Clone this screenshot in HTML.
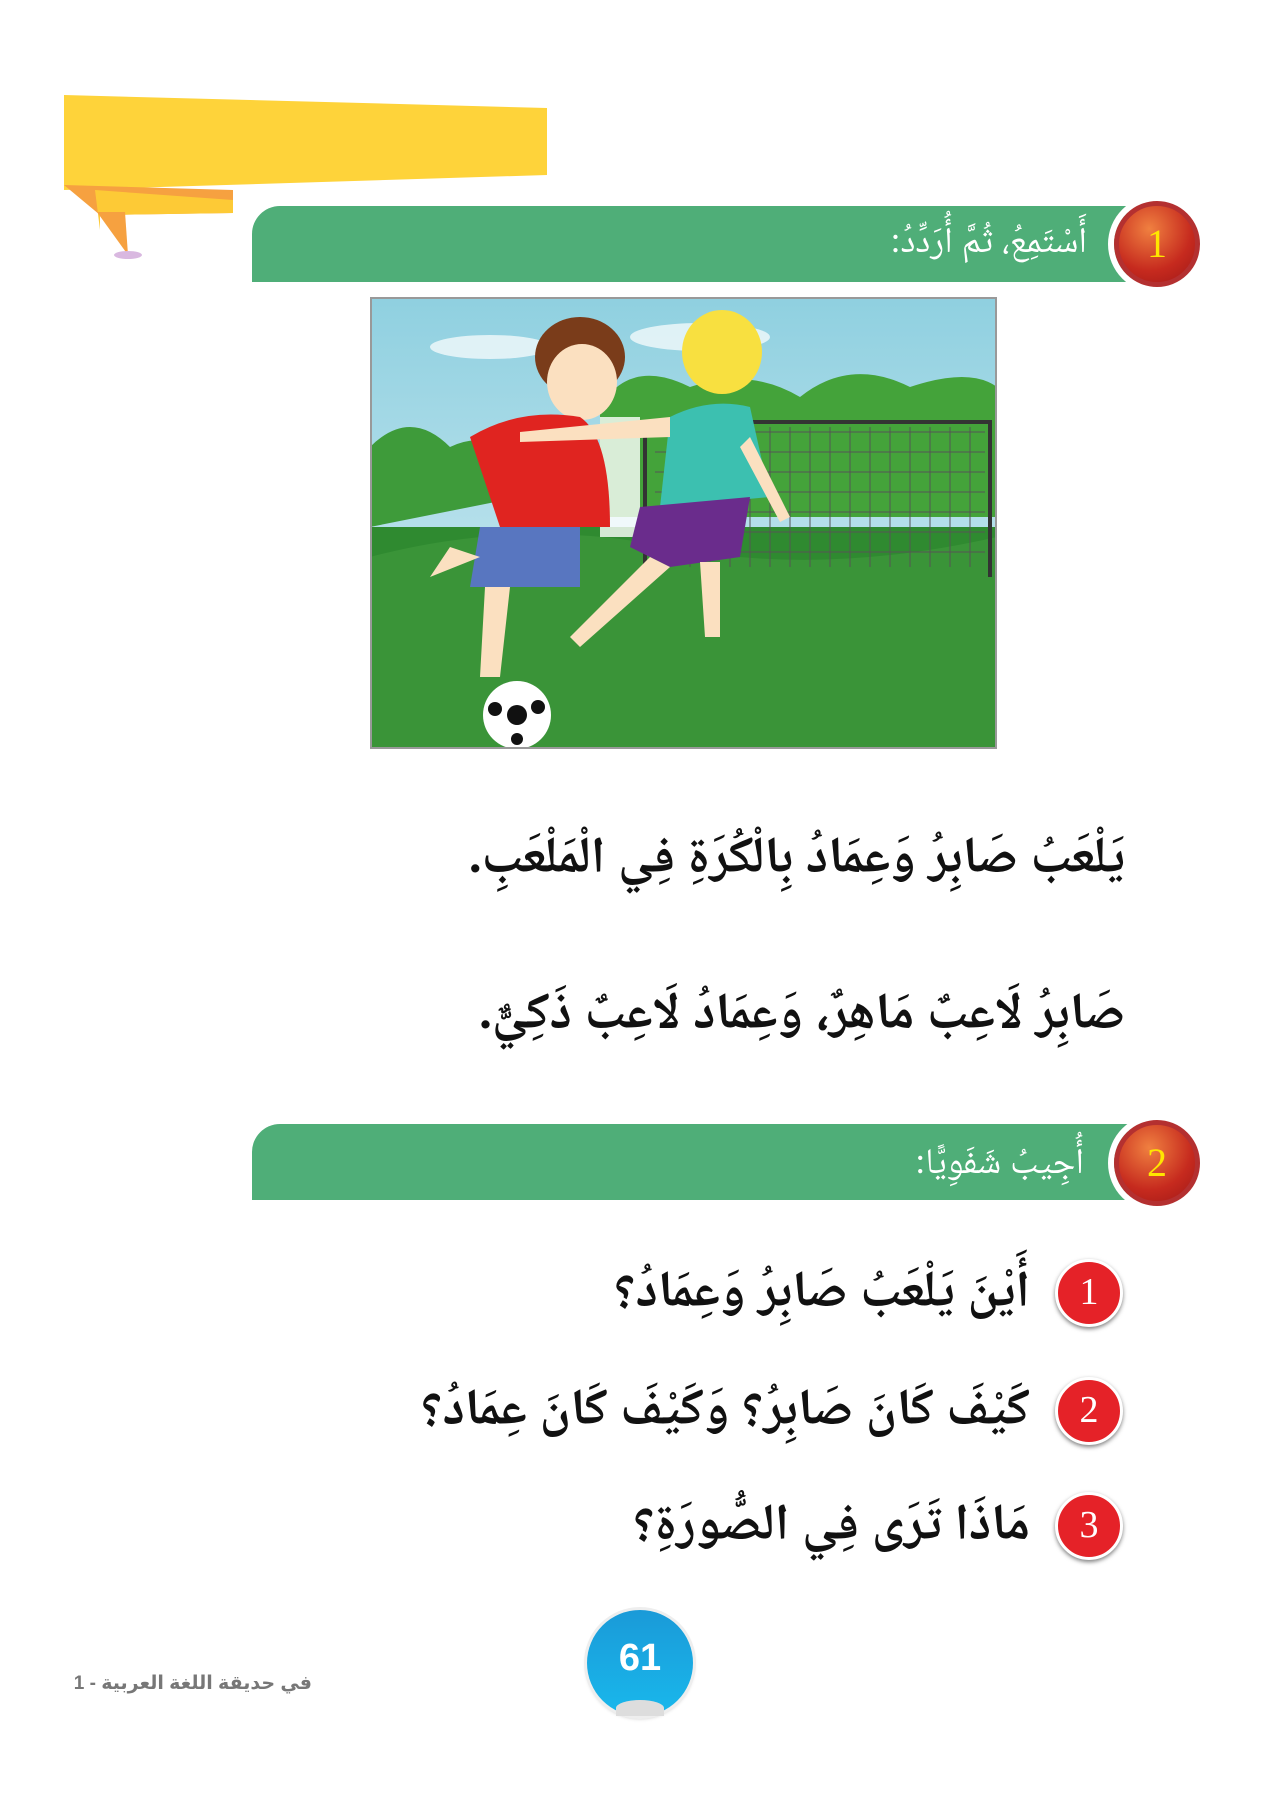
<!DOCTYPE html>
<html><head><meta charset="utf-8"><style>
body{margin:0;width:1272px;height:1800px;background:#fff;position:relative;overflow:hidden;font-family:"Liberation Serif","Noto Naskh Arabic","DejaVu Sans",serif}
.abs{position:absolute}
.bar{position:absolute;left:252px;width:876px;height:76px;background:#4fae78;border-radius:28px 0 0 0}
.big{position:absolute;direction:rtl;white-space:nowrap;font-size:51px;font-weight:bold;color:#111;text-align:right}
.qc{position:absolute;width:62px;height:62px;border-radius:50%;background:#e52228;border:3px solid #fff;box-shadow:0 2px 4px rgba(0,0,0,.5);color:#fff;font-size:38px;text-align:center;line-height:60px;font-family:"Liberation Serif",serif}
.nc{position:absolute;width:76px;height:76px;border-radius:50%;background:radial-gradient(circle at 40% 30%,#f08040,#c62a1e 60%,#a01818);border:5px solid #b43030;box-shadow:0 0 0 6px #fff;color:#ffe600;font-size:40px;text-align:center;line-height:76px}
</style></head><body>
<svg class="abs" style="left:0;top:0" width="600" height="280">
<polygon points="64,95 547,108 547,175 64,190" fill="#fed33a"/>
<polygon points="64,185 233,190 233,213 100,215" fill="#f6a140"/>
<polygon points="95,190 233,200 233,213 100,215 100,230" fill="#fdca36"/>
<polygon points="97,212 125,212 128,255" fill="#f6a140"/>
<ellipse cx="128" cy="255" rx="14" ry="4" fill="#d9b8e0"/>
</svg>
<div class="bar" style="top:206px"></div>
<div class="nc" style="left:1114px;top:201px">1</div>
<div class="abs" style="right:185px;top:214px;color:#fff;font-size:36px;direction:rtl;white-space:nowrap">أَسْتَمِعُ، ثُمَّ أُرَدِّدُ:</div>
<svg class="abs" style="left:370px;top:297px" width="627" height="452">
<defs><linearGradient id="sk" x1="0" y1="0" x2="0" y2="1"><stop offset="0" stop-color="#8fd0e0"/><stop offset="1" stop-color="#d8eef4"/></linearGradient></defs>
<rect x="0" y="0" width="627" height="452" fill="url(#sk)"/>
<ellipse cx="330" cy="40" rx="70" ry="14" fill="#fff" opacity=".7"/>
<ellipse cx="120" cy="50" rx="60" ry="12" fill="#fff" opacity=".7"/>
<path d="M0,150 Q40,110 80,150 Q120,130 160,170 L200,190 L0,230Z" fill="#3e9b3a"/>
<path d="M230,110 Q260,60 320,90 Q380,70 430,100 Q480,60 540,90 Q600,70 627,90 L627,220 L230,220Z" fill="#44a33a"/>
<rect x="0" y="230" width="627" height="222" fill="#2f8a30"/>
<path d="M0,260 Q150,220 300,250 T627,240 L627,452 L0,452Z" fill="#3a9438"/>
<g stroke="#333" stroke-width="4" fill="none"><path d="M275,280 L275,125 L620,125 L620,280"/></g>
<g stroke="#555" stroke-width="1"><path d="M285,135 H615 M285,155 H615 M285,175 H615 M285,195 H615 M285,215 H615 M285,235 H615 M285,255 H615"/><path d="M300,130V270 M320,130V270 M340,130V270 M360,130V270 M380,130V270 M400,130V270 M420,130V270 M440,130V270 M460,130V270 M480,130V270 M500,130V270 M520,130V270 M540,130V270 M560,130V270 M580,130V270 M600,130V270"/></g>
<rect x="230" y="120" width="40" height="120" fill="#fff" opacity=".8"/>
<ellipse cx="210" cy="60" rx="45" ry="40" fill="#7a3c1a"/>
<ellipse cx="212" cy="85" rx="35" ry="38" fill="#fbe0c0"/>
<path d="M100,140 Q150,110 210,120 Q240,140 240,230 L130,230 Z" fill="#e02420"/>
<path d="M110,230 L210,230 L210,290 L100,290Z" fill="#5876c0"/>
<path d="M115,290 L140,290 L130,380 L110,380Z M80,250 L110,260 L60,280 Z" fill="#fbe0c0"/>
<circle cx="147" cy="418" r="34" fill="#fff"/><circle cx="147" cy="418" r="10" fill="#111"/><circle cx="125" cy="412" r="7" fill="#111"/><circle cx="168" cy="410" r="7" fill="#111"/><circle cx="147" cy="442" r="6" fill="#111"/>
<ellipse cx="352" cy="55" rx="40" ry="42" fill="#f8e040"/>
<path d="M300,120 Q340,100 380,110 L400,200 L290,210 Z" fill="#3cc0b0"/>
<path d="M270,210 L380,200 L370,260 L300,270 L260,250Z" fill="#6a2c8c"/>
<path d="M150,135 L300,120 L300,140 L150,145Z M380,140 L420,220 L410,225 L370,150Z" fill="#fbe0c0"/>
<path d="M280,260 L300,270 L210,350 L200,340Z M330,265 L350,265 L350,340 L335,340Z" fill="#fbe0c0"/>
<rect x="0" y="0" width="627" height="452" fill="none" stroke="#999" stroke-width="4"/>
</svg>
<div class="big" style="right:147px;top:818px">يَلْعَبُ صَابِرُ وَعِمَادُ بِالْكُرَةِ فِي الْمَلْعَبِ.</div>
<div class="big" style="right:147px;top:974px">صَابِرُ لَاعِبٌ مَاهِرٌ، وَعِمَادُ لَاعِبٌ ذَكِيٌّ.</div>
<div class="bar" style="top:1124px"></div>
<div class="nc" style="left:1114px;top:1120px">2</div>
<div class="abs" style="right:188px;top:1135px;color:#fff;font-size:36px;direction:rtl;white-space:nowrap">أُجِيبُ شَفَوِيًّا:</div>
<div class="qc" style="left:1055px;top:1259px">1</div>
<div class="qc" style="left:1055px;top:1377px">2</div>
<div class="qc" style="left:1055px;top:1492px">3</div>
<div class="big" style="right:242px;top:1252px">أَيْنَ يَلْعَبُ صَابِرُ وَعِمَادُ؟</div>
<div class="big" style="right:242px;top:1370px">كَيْفَ كَانَ صَابِرُ؟ وَكَيْفَ كَانَ عِمَادُ؟</div>
<div class="big" style="right:242px;top:1485px">مَاذَا تَرَى فِي الصُّورَةِ؟</div>
<div class="abs" style="left:587px;top:1610px;width:106px;height:106px;border-radius:50%;background:linear-gradient(#1a9ad8,#19b8ec);box-shadow:0 0 0 3px #eee,0 2px 4px rgba(0,0,0,.3);color:#fff;font:bold 38px 'Liberation Sans',sans-serif;text-align:center;line-height:96px">61</div>
<div class="abs" style="left:616px;top:1700px;width:48px;height:16px;background:#ddd;border-radius:50% 50% 0 0"></div>
<div class="abs" style="right:960px;top:1672px;direction:rtl;color:#777;font:bold 19px 'Liberation Sans','DejaVu Sans',sans-serif;white-space:nowrap">في حديقة اللغة العربية - 1</div>
</body></html>
